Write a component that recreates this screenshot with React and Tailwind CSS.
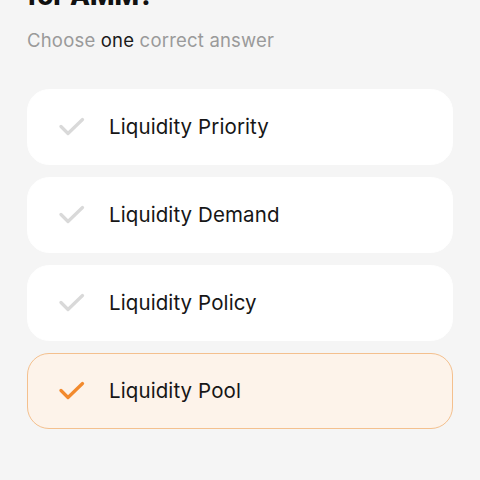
const options = [
  { label: 'Liquidity Priority', selected: false },
  { label: 'Liquidity Demand', selected: false },
  { label: 'Liquidity Policy', selected: false },
  { label: 'Liquidity Pool', selected: true },
]

function Check({ color }) {
  return (
    <svg width="26" height="20" viewBox="0 0 26 20" fill="none">
      <path d="M2 9.5 L9 16.5 L23.5 2.5" stroke={color} strokeWidth="3.2" strokeLinecap="round" strokeLinejoin="round" />
    </svg>
  )
}

export default function App() {
  return (
    <div
      className="w-[480px] h-[480px] overflow-hidden bg-[#f5f5f5] px-[27px]"
      style={{ fontFamily: 'Inter, "Noto Sans", sans-serif' }}
    >
      <h1 className="mt-[-21px] text-[26px] leading-[34px] font-extrabold text-[#111]">for AMM?</h1>
      <p className="mt-[15px] text-[18.5px] leading-[24px] text-[#9a9a9a] tracking-[0.2px]">
        Choose <span className="text-[#1a1a1a]">one</span> correct answer
      </p>

      <div className="mt-[37px] flex flex-col gap-[12px]">
        {options.map((o) => (
          <div
            key={o.label}
            className={
              o.selected
                ? 'h-[76px] rounded-[22px] border border-[#f4c08e] bg-[#fdf3ea] flex items-center pl-[31px]'
                : 'h-[76px] rounded-[22px] border border-white bg-white flex items-center pl-[31px]'
            }
          >
            <Check color={o.selected ? '#f28a2e' : '#d9d9d9'} />
            <span className="ml-[24px] text-[20.5px] text-[#161616] tracking-[0.1px]">{o.label}</span>
          </div>
        ))}
      </div>
    </div>
  )
}
